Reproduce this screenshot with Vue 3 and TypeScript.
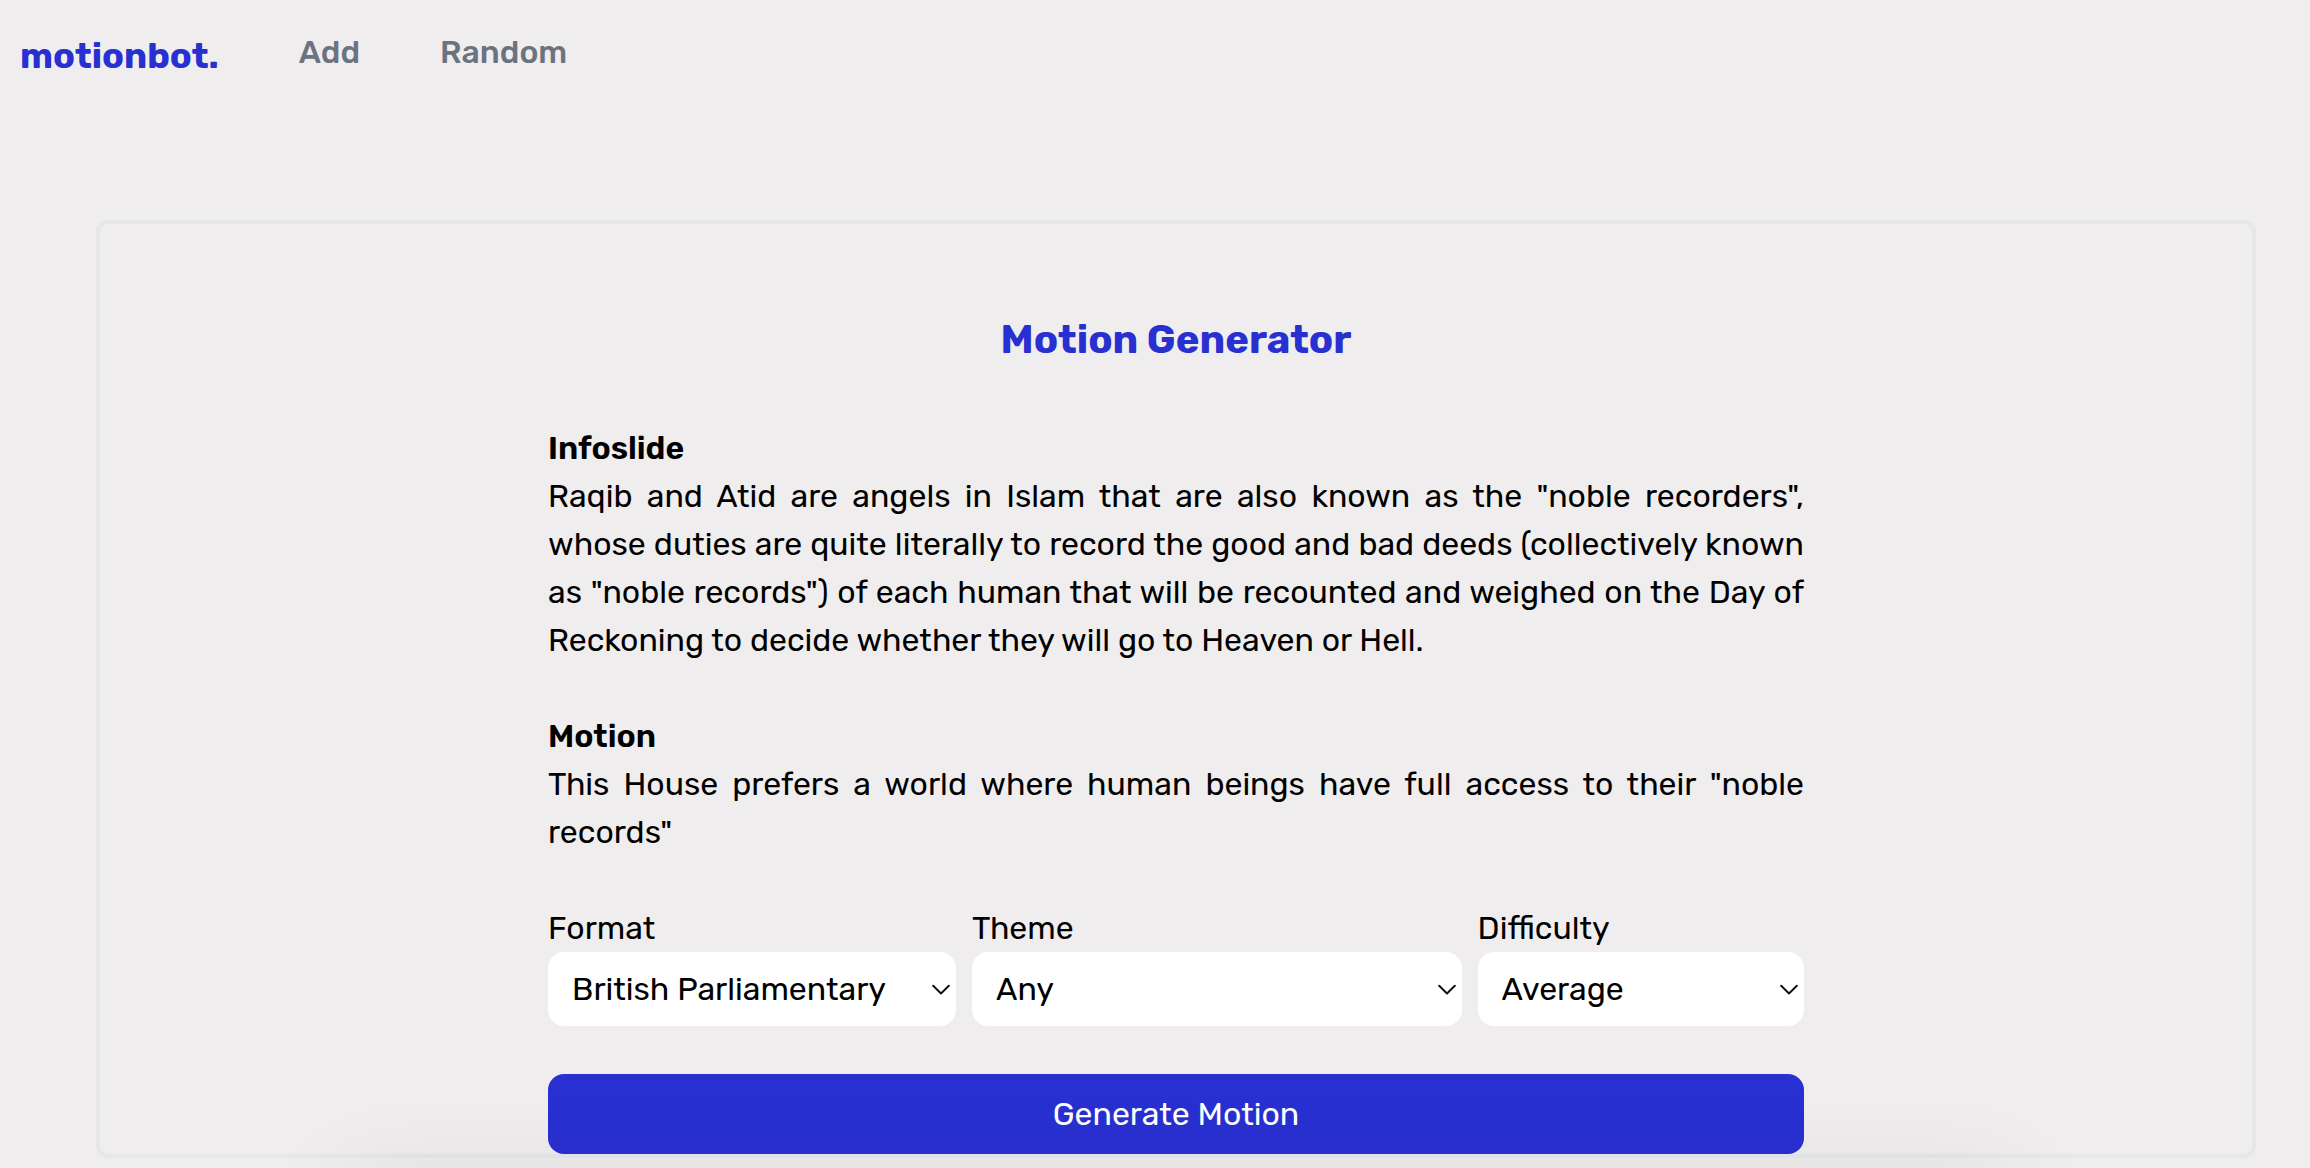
<script setup lang="ts">
import { reactive } from 'vue'

interface Field {
  id: string
  label: string
  options: string[]
}

const fields: Field[] = [
  { id: 'format', label: 'Format', options: ['British Parliamentary', 'Asian Parliamentary'] },
  { id: 'theme', label: 'Theme', options: ['Any', 'Religion', 'Politics', 'Economics'] },
  { id: 'difficulty', label: 'Difficulty', options: ['Average', 'Easy', 'Hard'] },
]

const selected = reactive<Record<string, string>>({
  format: 'British Parliamentary',
  theme: 'Any',
  difficulty: 'Average',
})
</script>

<template>
  <div class="page">
    <nav class="nav">
      <a class="brand" href="#">motionbot.</a>
      <a class="link" href="#add">Add</a>
      <a class="link" href="#random">Random</a>
    </nav>

    <main class="card">
      <div class="content">
        <h1>Motion Generator</h1>

        <section>
          <h2>Infoslide</h2>
          <p>
            Raqib and Atid are angels in Islam that are also known as the "noble recorders", whose
            duties are quite literally to record the good and bad deeds (collectively known as
            "noble records") of each human that will be recounted and weighed on the Day of
            Reckoning to decide whether they will go to Heaven or Hell.
          </p>
        </section>

        <section>
          <h2>Motion</h2>
          <p>
            This House prefers a world where human beings have full access to their "noble records"
          </p>
        </section>

        <form @submit.prevent>
          <div class="fields">
            <div v-for="field in fields" :key="field.id" class="field">
              <label :for="field.id">{{ field.label }}</label>
              <div class="control">
                <select :id="field.id" v-model="selected[field.id]">
                  <option v-for="option in field.options" :key="option">{{ option }}</option>
                </select>
                <svg class="chevron" viewBox="0 0 18 12" aria-hidden="true">
                  <path d="M1.2 1.800 9 9.500l7.800-7.700" />
                </svg>
              </div>
            </div>
          </div>
          <button type="submit">Generate Motion</button>
        </form>
      </div>
    </main>

    <div class="shade" aria-hidden="true"></div>
  </div>
</template>

<style>
body {
  margin: 0;
  background: #efedee;
}
</style>

<style scoped>
.page {
  position: relative;
  min-height: 100vh;
  box-sizing: border-box;
  overflow: hidden;
  background: #efedee;
  color: #000;
  font-family: Rubik, Roboto, sans-serif;
  font-size: 32px;
  line-height: 48px;
}

.nav {
  display: flex;
  align-items: flex-start;
  gap: 80px;
  height: 220px;
  box-sizing: border-box;
  padding: 28px 20px 0;
}

.brand {
  color: #2930d1;
  font-size: 36px;
  font-weight: 700;
  line-height: 56px;
  text-decoration: none;
}

.link {
  color: #6b7280;
  font-weight: 500;
  text-decoration: none;
}

.card {
  margin: 0 54px 0 96px;
  border: 4px solid #e5e7eb;
  border-radius: 12px;
}

.content {
  max-width: 1256px;
  margin: 0 auto;
  padding-top: 88px;
}

h1 {
  margin: 0 0 56px;
  color: #2930d1;
  font-size: 40px;
  font-weight: 700;
  line-height: 56px;
  text-align: center;
}

section {
  margin-bottom: 48px;
}

h2 {
  margin: 0;
  font-size: inherit;
  font-weight: 600;
}

p {
  margin: 0;
  text-align: justify;
}

.fields {
  display: grid;
  grid-template-columns: 5fr 6fr 4fr;
  gap: 16px;
  margin-bottom: 48px;
}

.field {
  display: flex;
  flex-direction: column;
}

.control {
  display: flex;
  position: relative;
}

select {
  flex: 1;
  min-width: 0;
  height: 74px;
  padding: 0 24px;
  border: 0;
  border-radius: 16px;
  appearance: none;
  background: #fff;
  color: #000;
  font: inherit;
}

.chevron {
  position: absolute;
  top: 32px;
  right: 6px;
  width: 18px;
  height: 12px;
  pointer-events: none;
  fill: none;
  stroke: #111;
  stroke-width: 2;
  stroke-linecap: round;
  stroke-linejoin: round;
}

button {
  display: block;
  width: 100%;
  height: 80px;
  border: 0;
  border-radius: 16px;
  background: #2930d1;
  color: #fff;
  font: inherit;
}

.shade {
  position: absolute;
  top: 100%;
  right: 13%;
  left: 15%;
  height: 80px;
  pointer-events: none;
  box-shadow: 0 20px 100px rgba(0, 0, 0, 0.1);
}
</style>
